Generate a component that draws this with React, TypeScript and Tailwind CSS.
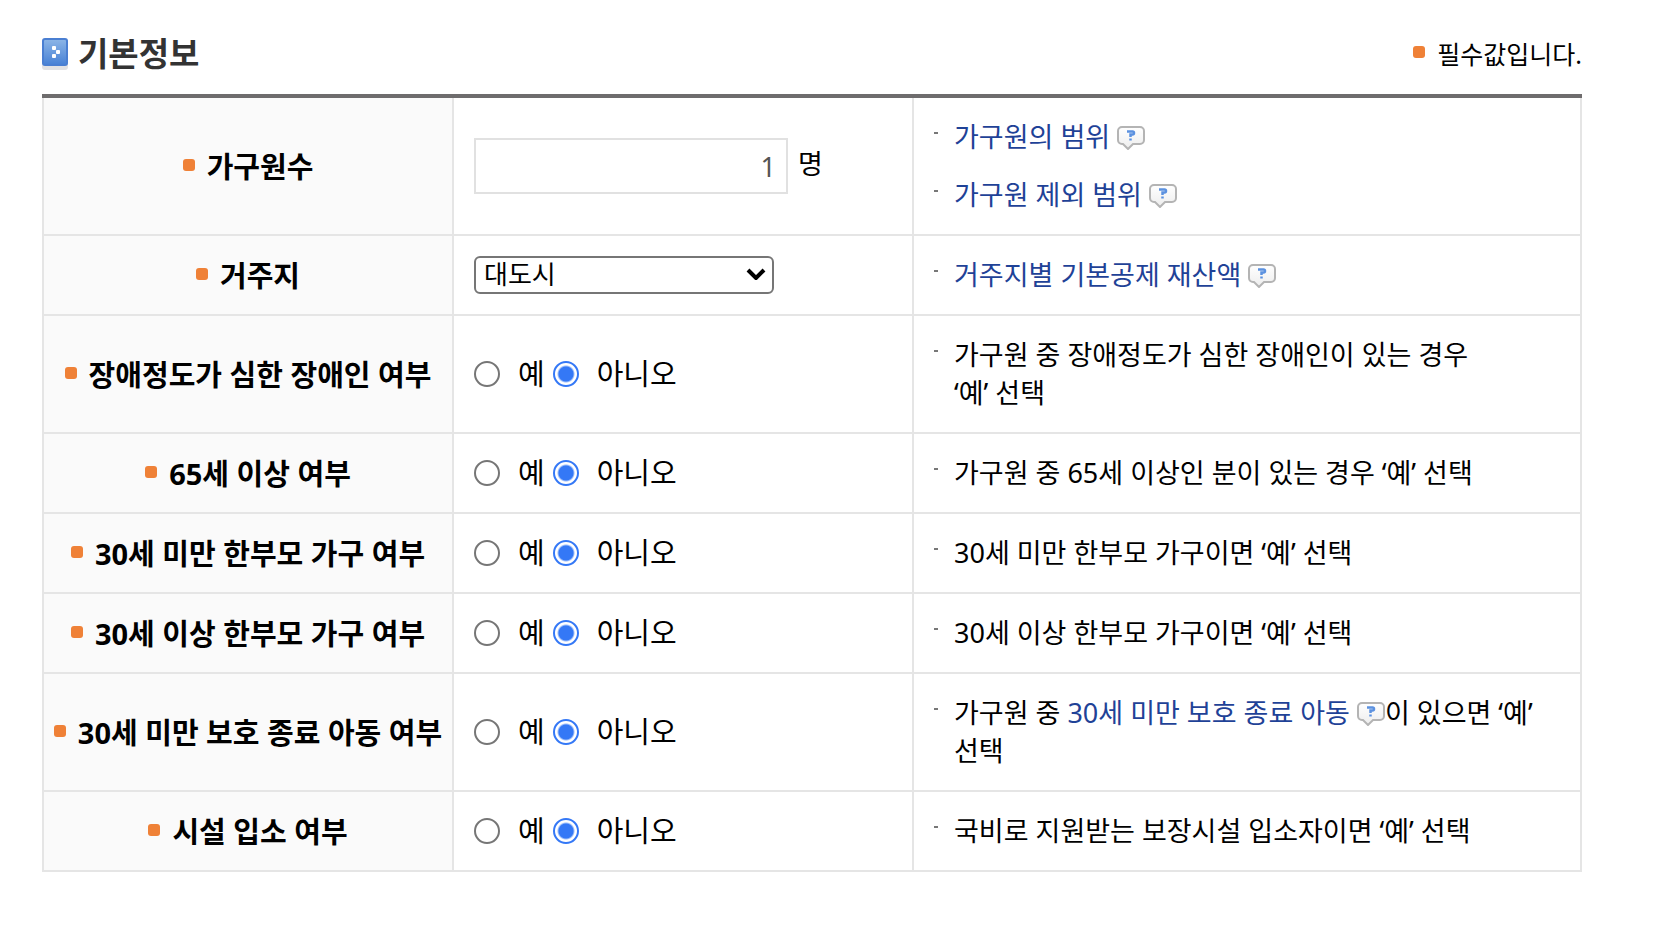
import { ReactNode } from 'react';

const Bullet = () => (
  <span className="mb-1 inline-block size-3 shrink-0 rounded-[3px] bg-[#ef8137]" />
);

const TitleIcon = () => (
  <svg className="h-8 w-[26px] shrink-0" viewBox="0 0 26 32" aria-hidden="true">
    <defs>
      <linearGradient id="title-fill" x1="0" y1="0" x2="0" y2="1">
        <stop offset="0" stopColor="#8ab4e6" />
        <stop offset="1" stopColor="#4a83d6" />
      </linearGradient>
    </defs>
    <rect x="0" y="6" width="26" height="26" rx="3" fill="#e2e2e4" />
    <rect x="0" y="0" width="26" height="28" rx="3" fill="#4a7fd2" />
    <rect x="2" y="2" width="22" height="24" rx="1" fill="url(#title-fill)" />
    <g fill="#fff">
      <rect x="10" y="8" width="4" height="4" rx="1" />
      <rect x="14" y="12" width="4" height="4" rx="1" />
      <rect x="10" y="16" width="4" height="4" rx="1" />
    </g>
  </svg>
);

const HelpIcon = () => (
  <svg className="inline-block h-6 w-7 align-[-3px]" viewBox="0 0 28 24" aria-hidden="true">
    <defs>
      <linearGradient id="help-fill" x1="0" y1="0" x2="0" y2="1">
        <stop offset="0" stopColor="#ffffff" />
        <stop offset="1" stopColor="#ededed" />
      </linearGradient>
    </defs>
    <path
      d="M5 1h18a4 4 0 0 1 4 4v9a4 4 0 0 1-4 4h-7l-5 5-5-5H5a4 4 0 0 1-4-4V5a4 4 0 0 1 4-4z"
      fill="url(#help-fill)"
      stroke="#b4b4b4"
      strokeWidth="2"
    />
    <path d="M10 5.5h5.5q1.500 0 1.500 1.500t-1.500 1.500h-2v2.500M13.500 12.500v2" fill="none" stroke="#5b91e0" strokeWidth="2.500" />
  </svg>
);

function HelpLink({ children }: { children: ReactNode }) {
  return (
    <a href="#" className="text-[#1f4297]">
      {children} <HelpIcon />
    </a>
  );
}

const radioClass =
  'size-[26px] appearance-none rounded-full border-2 border-[#767676] bg-white checked:border-[#3478f6] checked:bg-[radial-gradient(circle,#3478f6_7px,#fff_9px)]';

function YesNo({ name, label }: { name: string; label: string }) {
  return (
    <div role="radiogroup" aria-label={label} className="flex items-center text-[29px] leading-[38px]">
      <input id={`${name}-y`} type="radio" name={name} className={radioClass} />
      <label htmlFor={`${name}-y`} className="ml-[18px] mr-2">예</label>
      <input id={`${name}-n`} type="radio" name={name} defaultChecked className={radioClass} />
      <label htmlFor={`${name}-n`} className="ml-[18px]">아니오</label>
    </div>
  );
}

type Row = {
  id: string;
  label: string;
  field?: ReactNode;
  notes: ReactNode[];
};

const rows: Row[] = [
  {
    id: 'members',
    label: '가구원수',
    field: (
      <div className="flex items-center gap-2.5 text-[27px] leading-[38px]">
        <input
          id="members"
          type="text"
          defaultValue="1"
          className="h-14 w-[314px] border-2 border-[#e1e1e1] bg-white px-2.5 text-right text-[#555]"
        />
        <span className="pb-1">명</span>
      </div>
    ),
    notes: [<HelpLink>가구원의 범위</HelpLink>, <HelpLink>가구원 제외 범위</HelpLink>],
  },
  {
    id: 'region',
    label: '거주지',
    field: (
      <div className="relative w-[300px]">
        <select
          id="region"
          className="block h-[38px] w-full appearance-none rounded-md border-2 border-[#767676] bg-white pb-0.5 pl-2 text-[26px] leading-[32px]"
        >
          <option>대도시</option>
          <option>중소도시</option>
          <option>농어촌</option>
        </select>
        <svg className="pointer-events-none absolute right-2 top-3 h-3 w-5" viewBox="0 0 20 12" aria-hidden="true">
          <path d="M2 2l8 8 8-8" fill="none" stroke="#000" strokeWidth="4" />
        </svg>
      </div>
    ),
    notes: [<HelpLink>거주지별 기본공제 재산액</HelpLink>],
  },
  {
    id: 'disabled',
    label: '장애정도가 심한 장애인 여부',
    notes: [
      <>
        가구원 중 장애정도가 심한 장애인이 있는 경우
        <br />
        ‘예’ 선택
      </>,
    ],
  },
  {
    id: 'over65',
    label: '65세 이상 여부',
    notes: ['가구원 중 65세 이상인 분이 있는 경우 ‘예’ 선택'],
  },
  {
    id: 'single-under30',
    label: '30세 미만 한부모 가구 여부',
    notes: ['30세 미만 한부모 가구이면 ‘예’ 선택'],
  },
  {
    id: 'single-over30',
    label: '30세 이상 한부모 가구 여부',
    notes: ['30세 이상 한부모 가구이면 ‘예’ 선택'],
  },
  {
    id: 'care-leaver',
    label: '30세 미만 보호 종료 아동 여부',
    notes: [
      <>
        가구원 중 <HelpLink>30세 미만 보호 종료 아동</HelpLink>이 있으면 ‘예’ 선택
      </>,
    ],
  },
  {
    id: 'facility',
    label: '시설 입소 여부',
    notes: ['국비로 지원받는 보장시설 입소자이면 ‘예’ 선택'],
  },
];

export default function App() {
  return (
    <main className="bg-white pl-[42px] pr-24 pb-16 font-['Noto_Sans','Noto_Sans_CJK_KR',sans-serif] text-black break-keep">
      <header className="flex h-[94px] items-center justify-between pt-3.5">
        <h2 className="flex items-center gap-2.5 text-[33px] leading-[38px] font-bold text-[#333]">
          <TitleIcon />
          기본정보
        </h2>
        <p className="flex items-center gap-3 text-[25px] leading-[38px]">
          <Bullet />
          필수값입니다.
        </p>
      </header>

      <table className="w-full table-fixed border-separate border-spacing-0 border-t-4 border-[#6e6c6d]">
        <colgroup>
          <col className="w-[412px]" />
          <col className="w-[460px]" />
          <col />
        </colgroup>
        <tbody>
          {rows.map((row) => (
            <tr key={row.id}>
              <th scope="row" className="border-x-2 border-b-2 border-[#e5e5e5] bg-[#fafafa] text-[29px] font-bold">
                <div className="flex items-center justify-center gap-3 whitespace-nowrap pt-0.5 leading-[38px]">
                  <Bullet />
                  {row.field ? <label htmlFor={row.id}>{row.label}</label> : row.label}
                </div>
              </th>
              <td className="border-b-2 border-r-2 border-[#e5e5e5] px-5">
                {row.field ?? <YesNo name={row.id} label={row.label} />}
              </td>
              <td className="border-b-2 border-r-2 border-[#e5e5e5] p-5">
                <ul className="space-y-5 text-[27px] leading-[38px]">
                  {row.notes.map((note, i) => (
                    <li key={i} className="flex gap-4">
                      <span className="mt-3.5 h-0.5 w-1 shrink-0 bg-[#777]" />
                      <div>{note}</div>
                    </li>
                  ))}
                </ul>
              </td>
            </tr>
          ))}
        </tbody>
      </table>
    </main>
  );
}
